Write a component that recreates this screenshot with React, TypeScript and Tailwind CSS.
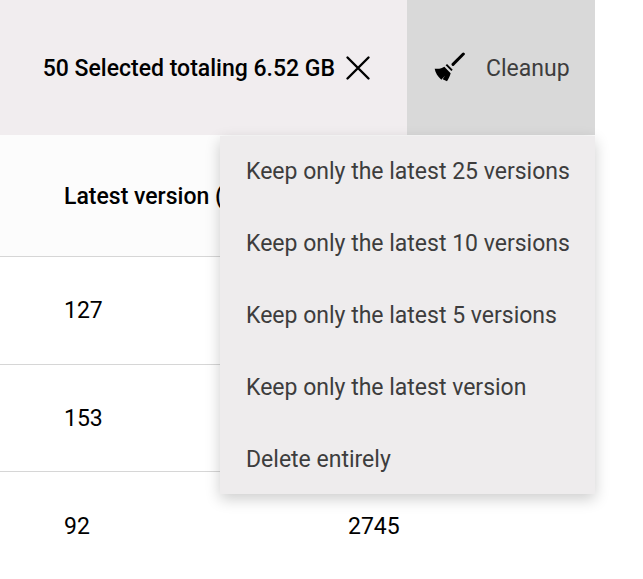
const menuItems = [
    'Keep only the latest 25 versions',
    'Keep only the latest 10 versions',
    'Keep only the latest 5 versions',
    'Keep only the latest version',
    'Delete entirely',
];

const rows = [
    { latest: '127', other: '', className: 'pt-[1px] border-b border-[#d6d6d6]' },
    { latest: '153', other: '', className: 'pt-[3px] border-b border-[#d6d6d6]' },
    { latest: '92', other: '2745', className: 'pt-[3px]' },
];

function BroomIcon() {
    return (
        <svg className="h-[31px] w-[32px]" viewBox="24 18 96 93" fill="black">
            <path d="M115 24L84 55" stroke="black" strokeWidth={9} strokeLinecap="round" />
            <path d="M64 56L81 73" stroke="black" strokeWidth={6} />
            <path d="M29 68C42 70 52 66 58 62L77 82C75 90 71 98 66 106L53 100L60 89L49 101C39 92 31 80 29 68Z" />
        </svg>
    );
}

export default function App() {
    return (
        <div className="relative h-[579px] w-[643px] overflow-hidden bg-white font-['Roboto',sans-serif] text-[23px] text-black">
            <div className="w-[595px]">
                <div className="flex h-[135px] bg-[#f1edef]">
                    <div className="flex w-[407px] items-center justify-end pr-[36px]">
                        <span className="pt-[4px] font-medium">50 Selected totaling 6.52 GB</span>
                        <svg className="ml-[10px] h-[26px] w-[26px]" viewBox="0 0 26 26" fill="none" stroke="black" strokeWidth={2.4} strokeLinecap="round">
                            <path d="M2.5 2.5l21 21M23.5 2.5l-21 21" />
                        </svg>
                    </div>
                    <div className="flex flex-1 items-center bg-[#d9d9d9] pl-[26px] text-[#3d3d3d]">
                        <BroomIcon />
                        <span className="ml-[21px] pt-[4px]">Cleanup</span>
                    </div>
                </div>
                <div className="flex h-[122px] items-center border-b border-[#d6d6d6] bg-[#fcfcfc] pl-[64px] pt-[4px] font-medium">
                    Latest version (
                </div>
                {rows.map((row) => (
                    <div key={row.latest} className={`flex h-[107.5px] items-center pl-[64px] ${row.className}`}>
                        <span className="w-[284px]">{row.latest}</span>
                        <span>{row.other}</span>
                    </div>
                ))}
            </div>
            <div className="absolute left-[220px] top-[136px] h-[358px] w-[375px] bg-[#eeeced] shadow-[0_5px_14px_rgba(0,0,0,0.2)]">
                {menuItems.map((item) => (
                    <div key={item} className="flex h-[72px] items-center pl-[26px] text-[#3d3d3d]">
                        {item}
                    </div>
                ))}
            </div>
        </div>
    );
}
